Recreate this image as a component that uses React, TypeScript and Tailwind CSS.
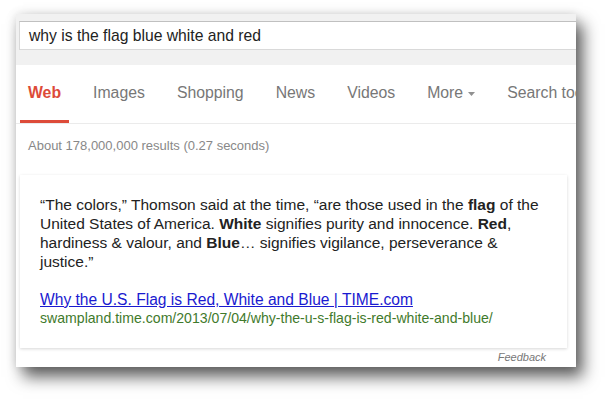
import React from "react";

const navItems = ["Web", "Images", "Shopping", "News", "Videos", "More", "Search tools"];

function NavItem({ label, active }: { label: string; active?: boolean }) {
    return (
        <div
            className={
                "flex items-center px-2 mr-4 border-b-[3px] whitespace-nowrap " +
                (active ? "border-[#dd4b39] text-[#dd4b39] font-bold" : "border-transparent text-[#777]")
            }
        >
            {label}
            {label === "More" && (
                <svg width="7" height="4" viewBox="0 0 7 4" className="ml-[5px] mt-[2px]">
                    <polygon points="0,0 7,0 3.5,4" fill="#909090" />
                </svg>
            )}
        </div>
    );
}

export default function App() {
    return (
        <div
            className="w-[606px] h-[400px] bg-white pt-[14px] pl-[16px] overflow-hidden"
            style={{ fontFamily: '"Liberation Sans", Arial, sans-serif' }}
        >
            <div className="w-[560px] h-[353px] bg-white overflow-hidden shadow-[7px_10px_15px_rgba(0,0,0,0.62),0_0_10px_rgba(0,0,0,0.12)]">
                {/* search header */}
                <div className="h-[51px] bg-[#f1f1f1] pt-[7px] pl-[3px]">
                    <div className="h-[29px] w-[620px] bg-white border border-[#d9d9d9] border-t-[#c0c0c0] flex items-center pl-[9px] text-[15.7px] text-[#222]">
                        why is the flag blue white and red
                    </div>
                </div>

                {/* tabs */}
                <div className="h-[59px] flex pl-[4px] border-b border-[#ebebeb] text-[15.8px]">
                    {navItems.map((n, i) => (
                        <NavItem key={n} label={n} active={i === 0} />
                    ))}
                </div>

                <div className="pl-[12px] pt-[14px] text-[13px] leading-[16px] text-[#888]">
                    About 178,000,000 results (0.27 seconds)
                </div>

                {/* answer card */}
                <div className="ml-[4px] mt-[21px] w-[547px] bg-white pt-[20px] pb-[21px] px-[20px] shadow-[0_1px_3px_rgba(0,0,0,0.16)]">
                    <p className="text-[15.5px] leading-[19px] text-[#222] whitespace-nowrap">
                        “The colors,” Thomson said at the time, “are those used in the <b>flag</b> of the
                        <br />
                        United States of America. <b>White</b> signifies purity and innocence. <b>Red</b>,
                        <br />
                        hardiness &amp; valour, and <b>Blue</b>… signifies vigilance, perseverance &amp;
                        <br />
                        justice.”
                    </p>
                    <a href="#" className="block mt-[19px] text-[15.6px] leading-[19px] text-[#1a1ad0] underline">
                        Why the U.S. Flag is Red, White and Blue | TIME.com
                    </a>
                    <div className="text-[14.1px] leading-[18px] text-[#3f7a2c]">
                        swampland.time.com/2013/07/04/why-the-u-s-flag-is-red-white-and-blue/
                    </div>
                </div>

                <div className="w-[530px] text-right mt-[2px] text-[11px] leading-[14px] italic text-[#777]">
                    Feedback
                </div>
            </div>
        </div>
    );
}
